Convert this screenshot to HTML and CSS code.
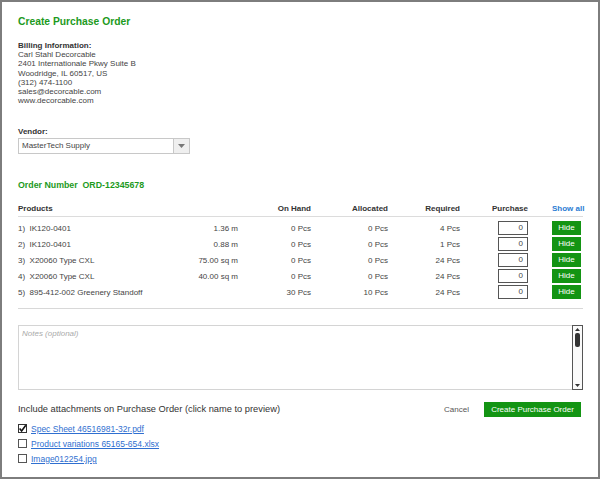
FILE: index.html
```html
<!DOCTYPE html>
<html>
<head>
<meta charset="utf-8">
<link rel="stylesheet" href="styles.css">
</head>
<body>
<div class="frame">
  <h1 class="title">Create Purchase Order</h1>

  <div class="billing">
    <div class="label">Billing Information:</div>
    <div>Carl Stahl Decorcable</div>
    <div>2401 Internationale Pkwy Suite B</div>
    <div>Woodridge, IL 60517, US</div>
    <div>(312) 474-1100</div>
    <div>sales@decorcable.com</div>
    <div>www.decorcable.com</div>
  </div>

  <div class="vendor">
    <div class="label">Vendor:</div>
    <div class="select">
      <span class="select-text">MasterTech Supply</span>
      <span class="select-btn"><svg width="7" height="4" viewBox="0 0 7 4"><path d="M0 0H7L3.5 4Z" fill="#777"/></svg></span>
    </div>
  </div>

  <div class="order-number">Order Number&nbsp;&nbsp;ORD-12345678</div>

  <div class="table">
    <div class="row head">
      <span class="c-name">Products</span>
      <span class="c-size"></span>
      <span class="c-num">On Hand</span>
      <span class="c-num">Allocated</span>
      <span class="c-num">Required</span>
      <span class="c-purch">Purchase</span>
      <span class="c-act"><a class="show-all">Show all</a></span>
    </div>
    <div class="row">
      <span class="c-name">1)&nbsp; IK120-0401</span>
      <span class="c-size">1.36 m</span>
      <span class="c-num">0 Pcs</span>
      <span class="c-num">0 Pcs</span>
      <span class="c-num">4 Pcs</span>
      <span class="c-purch"><span class="qty">0</span></span>
      <span class="c-act"><span class="hide">Hide</span></span>
    </div>
    <div class="row">
      <span class="c-name">2)&nbsp; IK120-0401</span>
      <span class="c-size">0.88 m</span>
      <span class="c-num">0 Pcs</span>
      <span class="c-num">0 Pcs</span>
      <span class="c-num">1 Pcs</span>
      <span class="c-purch"><span class="qty">0</span></span>
      <span class="c-act"><span class="hide">Hide</span></span>
    </div>
    <div class="row">
      <span class="c-name">3)&nbsp; X20060 Type CXL</span>
      <span class="c-size">75.00 sq m</span>
      <span class="c-num">0 Pcs</span>
      <span class="c-num">0 Pcs</span>
      <span class="c-num">24 Pcs</span>
      <span class="c-purch"><span class="qty">0</span></span>
      <span class="c-act"><span class="hide">Hide</span></span>
    </div>
    <div class="row">
      <span class="c-name">4)&nbsp; X20060 Type CXL</span>
      <span class="c-size">40.00 sq m</span>
      <span class="c-num">0 Pcs</span>
      <span class="c-num">0 Pcs</span>
      <span class="c-num">24 Pcs</span>
      <span class="c-purch"><span class="qty">0</span></span>
      <span class="c-act"><span class="hide">Hide</span></span>
    </div>
    <div class="row">
      <span class="c-name">5)&nbsp; 895-412-002 Greenery Standoff</span>
      <span class="c-size"></span>
      <span class="c-num">30 Pcs</span>
      <span class="c-num">10 Pcs</span>
      <span class="c-num">24 Pcs</span>
      <span class="c-purch"><span class="qty">0</span></span>
      <span class="c-act"><span class="hide">Hide</span></span>
    </div>
  </div>

  <div class="notes">
    <div class="notes-text">Notes (optional)</div>
    <div class="scrollbar">
      <svg width="5" height="3" viewBox="0 0 5 3"><path d="M0 3H5L2.5 0Z" fill="#333"/></svg>
      <span class="thumb"></span>
      <span class="track"></span>
      <svg width="5" height="3" viewBox="0 0 5 3"><path d="M0 0H5L2.5 3Z" fill="#333"/></svg>
    </div>
  </div>

  <div class="footer">
    <div class="attach">
      <div class="attach-title">Include attachments on Purchase Order (click name to preview)</div>
      <div class="file"><span class="box checked"><svg width="9" height="9" viewBox="0 0 9 9"><path d="M1.6 4.6L3.6 6.9L7.8 1.2" fill="none" stroke="#111" stroke-width="1.6"/></svg></span><a class="link">Spec Sheet 46516981-32r.pdf</a></div>
      <div class="file"><span class="box"></span><a class="link">Product variations 65165-654.xlsx</a></div>
      <div class="file"><span class="box"></span><a class="link">Image012254.jpg</a></div>
    </div>
    <div class="actions">
      <span class="cancel">Cancel</span>
      <span class="create">Create Purchase Order</span>
    </div>
  </div>
</div>
</body>
</html>
```
FILE: styles.css
```css
* { box-sizing: border-box; }
html, body { margin: 0; padding: 0; background: #fff; }
body {
  font-family: "Liberation Sans", Arial, sans-serif;
  color: #444;
  font-size: 8px;
}
.frame {
  width: 600px;
  height: 479px;
  border: 2px solid #7d7d7d;
  padding: 13px 15px 0 16px;
  overflow: hidden;
}
.title {
  margin: 0;
  font-size: 10.3px;
  font-weight: bold;
  color: #1d9a1d;
  line-height: 14px;
}
.billing {
  margin-top: 12px;
  line-height: 9.2px;
  font-size: 8px;
  color: #444;
}
.label {
  font-weight: bold;
  color: #333;
}
.vendor {
  margin-top: 22px;
  line-height: 10px;
}
.select {
  margin-top: 1px;
  width: 172px;
  height: 16px;
  border: 1px solid #c8c8c8;
  display: flex;
  align-items: stretch;
  background: #fff;
}
.select-text {
  flex: 1;
  padding-left: 3px;
  display: flex;
  align-items: center;
  color: #444;
}
.select-btn {
  width: 16px;
  border-left: 1px solid #c8c8c8;
  background: #efefef;
  display: flex;
  align-items: center;
  justify-content: center;
}
.order-number {
  margin-top: 26px;
  color: #1d9a1d;
  font-weight: bold;
  font-size: 8.8px;
  line-height: 10px;
}
.table {
  margin-top: 14px;
  width: 565px;
  border-bottom: 1px solid #d8d8d8;
  padding-bottom: 8px;
}
.row {
  display: grid;
  grid-template-columns: 140px 80px 73px 77px 72px 70px 53px;
  align-items: center;
  height: 16px;
}
.row.head {
  height: 13px;
  font-weight: bold;
  color: #333;
  border-bottom: 1px solid #dcdcdc;
  margin-bottom: 3px;
  align-items: start;
}
.c-name { text-align: left; white-space: nowrap; }
.c-size { text-align: right; }
.c-num { text-align: right; }
.c-purch { text-align: right; padding-right: 2px; display: flex; justify-content: flex-end; }
.c-act { padding-left: 22px; display: flex; }
.show-all { color: #2b7cd3; font-weight: bold; white-space: nowrap; }
.qty {
  width: 30px;
  height: 14px;
  border: 1px solid #555;
  text-align: right;
  padding-right: 4px;
  line-height: 12px;
  color: #444;
  background: #fff;
}
.hide {
  width: 29px;
  height: 14px;
  background: #139413;
  color: #fff;
  text-align: center;
  line-height: 14px;
}
.notes {
  margin-top: 16px;
  width: 565px;
  height: 65px;
  border: 1px solid #d4d4d4;
  display: flex;
}
.notes-text {
  flex: 1;
  padding: 3px 0 0 3px;
  color: #aaa;
  font-style: italic;
}
.scrollbar {
  width: 11px;
  border: 1px solid #555;
  margin: -1px -1px -1px 0;
  background: #fafafa;
  display: flex;
  flex-direction: column;
  align-items: center;
  padding: 2px 0;
}
.thumb {
  margin-top: 2px;
  width: 5px;
  height: 14px;
  background: #333;
  border-radius: 2px;
}
.track { flex: 1; }
.footer {
  margin-top: 11px;
  width: 565px;
  display: flex;
  justify-content: space-between;
}
.attach-title {
  font-size: 9.3px;
  line-height: 12px;
  color: #333;
}
.attach { padding-top: 2px; }
.file {
  display: flex;
  align-items: center;
  height: 15px;
}
.attach-title + .file { margin-top: 6px; }
.box {
  width: 9px;
  height: 9px;
  border: 1px solid #555;
  margin-right: 4px;
  display: inline-block;
}
.box.checked { border-color: #333; }
.box svg { display: block; margin: -1px; }
.link { color: #2f6fd0; text-decoration: underline; font-size: 8.5px; }
.actions {
  display: flex;
  align-items: flex-start;
  gap: 15px;
  padding-top: 1px;
  padding-right: 2px;
}
.cancel {
  line-height: 15px;
  color: #555;
}
.create {
  background: #139413;
  color: #fff;
  height: 15px;
  line-height: 15px;
  width: 97px;
  text-align: center;
}
```
